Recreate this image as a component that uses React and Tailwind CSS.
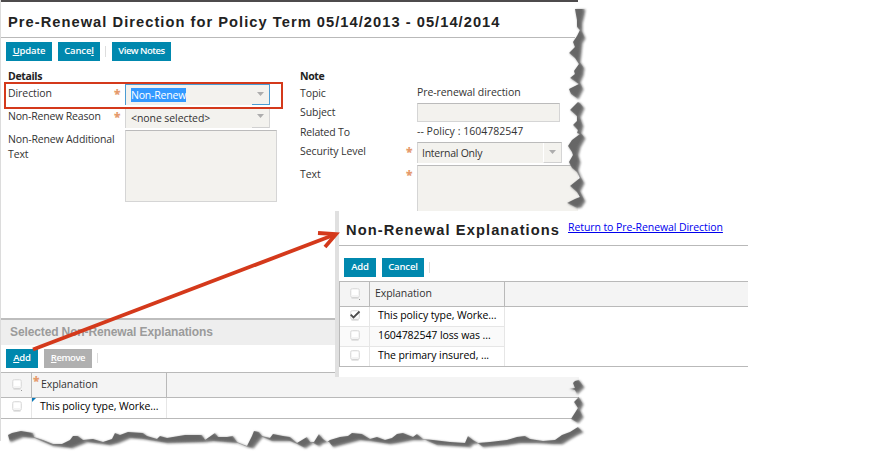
import React from "react";

function Label({ children, className = "" }) {
  return <div className={`shrink-0 whitespace-nowrap text-[10.5px] leading-[15px] tracking-[-0.08px] text-[#333] ${className}`}>{children}</div>;
}

function Button({ children, className = "" }) {
  return (
    <button className={`flex h-[19px] shrink-0 items-center justify-center bg-[#0088ae] pb-px text-[9.5px] font-semibold leading-none tracking-[-0.15px] whitespace-nowrap text-white ${className}`}>
      <span>{children}</span>
    </button>
  );
}

function Star({ className = "" }) {
  return <span className={`shrink-0 text-[12px] font-extrabold leading-[15px] text-[#e59a6b] ${className}`}>*</span>;
}

function Check({ checked = false, header = false }) {
  return (
    <svg width="12" height="12" viewBox="0 0 12 12" className="ml-px">
      <rect x="1.5" y="0.5" width="9" height="9" rx="2" fill="#f4f4f4" stroke="#dedede" />
      <path d="M2.5 10H9.5" stroke="#cbcbcb" />
      <rect x="3" y="2" width="6" height="5" fill="#fff" />
      {header && <path d="M10 11.500h1" stroke="#999" />}
      {checked && <path d="M1.700 4.600 4.500 7.500 10.500 1.500" fill="none" stroke="#4a4a4a" strokeWidth="1.8" />}
    </svg>
  );
}

function Caret() {
  return (
    <svg width="7" height="4" viewBox="0 0 7 4">
      <path d="M0 0H7L3.5 4Z" fill="#adadad" />
    </svg>
  );
}

function MainPanel() {
  return (
    <main className="flex h-[441px] w-[579px] flex-col border-l border-[#dcdcdc]">
      <div className="h-[2px] w-[577px] bg-[#4d4b4c]" />
      <header className="h-[36px] w-[574px] border-b border-[#b9b9b9] pt-[11px] pl-[7px]">
        <h1 className="font-['Liberation_Sans',Arial,sans-serif] text-[14.67px] leading-[18px] font-bold tracking-[1.04px] whitespace-nowrap text-[#222]">
          Pre-Renewal Direction for Policy Term 05/14/2013 - 05/14/2014
        </h1>
      </header>
      <div className="flex h-[31px] pt-[4px] pl-[5px]">
        <Button className="w-[46px]"><u>U</u>pdate</Button>
        <Button className="ml-[6px] w-[42px]">Cance<u>l</u></Button>
        <div className="mt-[4px] ml-[5px] h-[11px] w-px bg-[#ddd]" />
        <Button className="ml-[6px] w-[59px] tracking-[-0.5px]!">View Notes</Button>
      </div>

      <div className="flex h-[249px]">
        <section className="w-[292px] shrink-0 pl-[7px]">
          <h2 className="h-[15px] text-[10.5px] leading-[15px] font-bold tracking-[-0.35px] text-[#222]">Details</h2>
          <div className="flex h-[24px]">
            <Label className="w-[106px] pt-[2px]">Direction</Label>
            <Star className="w-[11px] pt-[2px]" />
            <div className="flex h-[21px] w-[145px] border border-b-0 border-[#4b9cd3] bg-[#f3f2ee]">
              <div className="w-[126px] pt-[3px] pl-[5px]">
                <span className="block h-[14px] w-[55px] bg-[#3399ff] text-[10.5px] leading-[15px] tracking-[-0.2px] whitespace-nowrap text-white">Non-Renew</span>
              </div>
              <div className="flex h-[20px] w-[17px] justify-center border-b border-[#4b9cd3] pt-[7px]"><Caret /></div>
            </div>
          </div>
          <div className="flex h-[22px]">
            <Label className="w-[106px] pt-px tracking-[-0.18px]!">Non-Renew Reason</Label>
            <Star className="w-[11px] pt-px" />
            <div className="flex h-[20px] w-[145px] border-x border-[#d5d5d5] bg-[#f3f2ee]">
              <div className="w-[126px] pt-[3px] pl-[5px]">
                <Label>&lt;none selected&gt;</Label>
              </div>
              <div className="flex h-[20px] w-[17px] justify-center border-b border-[#d0d0d0] pt-[6px]"><Caret /></div>
            </div>
          </div>
          <div className="flex">
            <Label className="w-[117px] pt-[2px] tracking-[-0.15px]!">Non-Renew Additional<br />Text</Label>
            <div className="h-[72px] w-[152px] border border-t-[#bbb] border-r-[#d5d5d5] border-b-[#d5d5d5] border-l-[#d5d5d5] bg-[#f3f2ee]" />
          </div>
        </section>

        <section className="w-[286px] shrink-0 pl-[7px]">
          <h2 className="h-[15px] text-[10.5px] leading-[15px] font-bold tracking-[-0.35px] text-[#222]">Note</h2>
          <div className="flex h-[19px]">
            <Label className="w-[117px] pt-[2px]">Topic</Label>
            <Label className="pt-px">Pre-renewal direction</Label>
          </div>
          <div className="flex h-[20px]">
            <Label className="w-[117px] pt-[2px]">Subject</Label>
            <div className="h-[19px] w-[143px] border border-t-[#bbb] border-r-[#d5d5d5] border-b-[#d5d5d5] border-l-[#d5d5d5] bg-[#f3f2ee]" />
          </div>
          <div className="flex h-[19px]">
            <Label className="w-[117px] pt-[2px] tracking-[-0.2px]!">Related To</Label>
            <Label className="pt-px tracking-[0.02px]!">-- Policy : 1604782547</Label>
          </div>
          <div className="flex h-[23px]">
            <Label className="w-[106px] pt-[2px]">Security Level</Label>
            <Star className="w-[11px] pt-[2px]" />
            <div className="flex h-[21px] w-[145px] border border-b-0 border-t-[#bbb] border-r-[#d5d5d5] border-l-[#d5d5d5] bg-[#f3f2ee]">
              <div className="w-[125px] pt-[3px] pl-[4px]"><Label className="tracking-[-0.25px]!">Internal Only</Label></div>
              <div className="flex h-[20px] w-[18px] justify-center border-b border-l border-b-[#d0d0d0] border-l-white pt-[7px]"><Caret /></div>
            </div>
          </div>
          <div className="flex h-[46px]">
            <Label className="w-[106px] pt-[2px]">Text</Label>
            <Star className="w-[11px] pt-[2px]" />
            <div className="h-[46px] w-[161px] border-t border-l border-t-[#bbb] border-l-[#d5d5d5] bg-[#f3f2ee]" />
          </div>
        </section>
      </div>

      <section>
        <h2 className="h-[27px] w-[335px] border-t-2 border-[#bdbdbd] bg-[#eee] pt-[3px] pl-[9px] font-['Liberation_Sans',Arial,sans-serif] text-[12px] leading-[18px] font-bold tracking-[-0.12px] whitespace-nowrap text-[#9b9b9b]">
          Selected Non-Renewal Explanations
        </h2>
        <div className="flex h-[27px] pt-[4px] pl-[5px]">
          <Button className="w-[32px]"><u>A</u>dd</Button>
          <Button className="ml-[6px] w-[48px] bg-[#b0b0b0]! tracking-[-0.45px]!"><u>R</u>emove</Button>
          <div className="mt-[4px] ml-[5px] h-[10px] w-px bg-[#ddd]" />
        </div>
        <div className="flex h-[26px] w-[578px] border-y border-[#b9b9b9] bg-[#f4f4f4]">
          <div className="flex w-[31px] items-center justify-center border-r border-[#b9b9b9]"><Check header /></div>
          <div className="flex w-[135px] border-r border-[#b9b9b9]">
            <Star className="w-[8px] pl-px" />
            <Label className="pt-[4px] pl-[1px]">Explanation</Label>
          </div>
        </div>
        <div className="flex h-[21px] w-[578px] border-b border-[#b9b9b9]">
          <div className="flex w-[31px] items-center justify-center border-r border-[#e6e6e6] pb-[2px]"><Check /></div>
          <div className="flex w-[135px] border-r border-[#e6e6e6]">
            <svg width="4" height="4" className="shrink-0"><path d="M0 0H4L0 4Z" fill="#0878b8" /></svg>
            <Label className="pt-px pl-[4px] text-black!">This policy type, Worke...</Label>
          </div>
        </div>
      </section>
    </main>
  );
}

const rows = [
  { text: "This policy type, Worke...", checked: true },
  { text: "1604782547 loss was ...", checked: false },
  { text: "The primary insured, ...", checked: false },
];

function Popup() {
  return (
    <aside className="absolute top-[211px] left-[335px] h-[166px] w-[413px] border-l-4 border-[#e0e0e0] bg-white">
      <header className="flex h-[35px] border-b border-[#b9b9b9] pl-[7px]">
        <h2 className="w-[222px] pt-[10px] font-['Liberation_Sans',Arial,sans-serif] text-[14.67px] leading-[18px] font-bold tracking-[1.08px] whitespace-nowrap text-[#222]">
          Non-Renewal Explanations
        </h2>
        <Label className="pt-[9px] text-[#0000ee]! underline">Return to Pre-Renewal Direction</Label>
      </header>
      <div className="flex h-[35px] pt-[12px] pl-[5px]">
        <Button className="w-[32px]">Add</Button>
        <Button className="ml-[6px] w-[42px]">Cancel</Button>
        <div className="mt-[4px] ml-[5px] h-[11px] w-px bg-[#ddd]" />
      </div>
      <div className="flex h-[26px] border border-r-0 border-[#b9b9b9] bg-[#f4f4f4]">
        <div className="flex w-[30px] items-center justify-center border-r border-[#b9b9b9]"><Check header /></div>
        <div className="w-[135px] border-r border-[#b9b9b9] pt-[4px] pl-[5px]"><Label>Explanation</Label></div>
      </div>
      <div className="border-b border-l border-[#b9b9b9]">
        {rows.map((row, i) => (
          <div key={row.text} className={`flex w-[165px] ${i < 2 ? "h-[20px] border-b border-[#e6e6e6]" : "h-[19px]"} ${i === 1 ? "bg-[#fafafa]" : ""}`}>
            <div className="flex w-[30px] items-center justify-center border-r border-[#e6e6e6] pb-[2px]"><Check checked={row.checked} /></div>
            <div className="w-[135px] border-r border-[#e6e6e6] pt-px pl-[8px]"><Label className="text-black!">{row.text}</Label></div>
          </div>
        ))}
      </div>
    </aside>
  );
}

function TornEdges() {
  return (
    <svg className="pointer-events-none absolute top-0 left-0" width="600" height="462" viewBox="0 0 600 462">
      <defs>
        <filter id="soft" filterUnits="userSpaceOnUse" x="0" y="0" width="600" height="462"><feGaussianBlur stdDeviation="1.2" /></filter>
        <filter id="feather" filterUnits="userSpaceOnUse" x="0" y="0" width="600" height="462"><feGaussianBlur stdDeviation="0.8" /></filter>
        <g id="edge">
          <path d="M575 9 585 9 584 15 582 23 582 31 585 38 582 43 581 53 580 62 584 68 583 75 580 82 583 89 580 95 578 99 571 94 569 89 579 84 570 78 575 74 574 71 579 64 575 58 569 53 575 47 573 42 577 36 580 30 577 27 577 20Z" />
          <path d="M578 102 580 103 584 108 580 117 583 126 581 133 585 138 580 147 578 155 580 162 578 170 581 177 584 183 580 191 585 201 581 207 577 208 567 203 575 199 580 197 577 192 570 186 575 182 580 178 577 172 572 168 569 162 573 155 572 152 568 146 572 140 580 134 577 133 578 130 573 125 577 121 577 116 570 110Z" />
          <path d="M569 389 575 388 573 383 575 381 579 380 584 387 577 394 575 390Z M579 397 574 402 578 408 571 419 578 423 583 417 580 410 583 404Z" />
          <path d="M8 435 12 433 21 431 33 433 34 437 43 440 53 444 62 444 70 440 73 436 78 436 83 440 93 439 103 442 112 439 115 433 120 435 128 432 143 433 147 436 157 439 160 436 167 438 185 435 202 435 205 440 215 433 218 437 227 437 233 436 237 442 247 446 252 436 254 431 259 432 262 436 270 438 273 434 283 436 290 437 297 443 307 437 310 442 314 442 319 434 323 439 327 442 330 440 340 437 348 436 352 433 362 434 370 439 377 437 385 440 392 438 397 434 403 433 413 437 417 434 423 439 433 440 450 442 465 443 468 436 473 440 478 443 490 442 507 440 517 437 525 436 530 439 543 441 555 440 562 435 570 432 578 427 583 432 577 435 570 439 562 444 553 444 537 443 520 443 507 445 483 447 478 443.5 473 444 470 447 437 445 425 440 413 440 397 443 390 444 370 441 360 440 333 447 329 442 323 443 319 446 313 443 305 448 297 444 290 441 283 441 272 441 262 437 253 448 247 447 237 443 213 441 205 442 167 443 143 439 130 438 118 443 110 445 87 442 72 448 53 446 34 438 23 437 10 442Z" />
        </g>
        <mask id="crisp" maskUnits="userSpaceOnUse" x="0" y="0" width="600" height="462">
          <use href="#edge" fill="#fff" />
        </mask>
      </defs>
      <use href="#edge" x="0.7" y="0.6" fill="#888" filter="url(#soft)" />
      <g mask="url(#crisp)">
        <use href="#edge" x="-1.6" y="-1.3" fill="#666" stroke="#666" strokeWidth="0.8" filter="url(#feather)" />
      </g>
    </svg>
  );
}

function Annotations() {
  return (
    <svg className="pointer-events-none absolute top-0 left-0" width="600" height="462" viewBox="0 0 600 462">
      <g fill="none" stroke="#d4391b">
        <rect x="5" y="83" width="277" height="25" strokeWidth="2" />
        <path d="M33 349.500 335 234.500" strokeWidth="3.8" />
        <path d="M318 233 336 234.200 325 247" strokeWidth="3.800" />
      </g>
    </svg>
  );
}

export default function App() {
  return (
    <div className="relative h-[462px] w-[872px] overflow-hidden bg-white font-['Open_Sans','Noto_Sans',sans-serif]">
      <MainPanel />
      <TornEdges />
      <Popup />
      <Annotations />
    </div>
  );
}
